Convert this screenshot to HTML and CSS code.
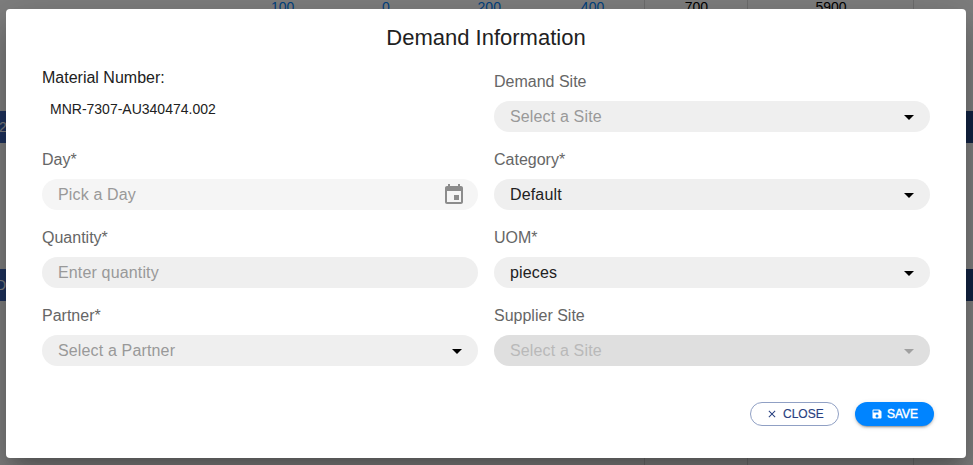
FILE: index.html
```html
<!DOCTYPE html>
<html lang="en">
<head>
<meta charset="utf-8">
<title>Demand Information</title>
<link rel="stylesheet" href="styles.css">
</head>
<body>
<div class="sheet">
  <div class="totals">
    <span class="cell link">100</span><span class="cell link">0</span><span class="cell link">200</span><span class="cell link">400</span><span class="cell total">700</span><span class="cell grand">5900</span><span class="cell rest"></span>
  </div>
  <div class="band first">2</div>
  <div class="band second">D</div>
  <div class="totals lower">
    <span class="cell"></span><span class="cell"></span><span class="cell"></span><span class="cell"></span><span class="cell total"></span><span class="cell grand"></span><span class="cell rest"></span>
  </div>
</div>
<div class="backdrop">
  <form class="dialog">
    <h2>Demand Information</h2>
    <div class="grid">
      <div class="field material">
        <div class="caption">Material Number:</div>
        <div class="number">MNR-7307-AU340474.002</div>
      </div>
      <div class="field"><div class="label">Demand Site</div><div class="control hint"><span>Select a Site</span><svg class="arrow" viewBox="0 0 24 24"><path d="M7 10l5 5 5-5z"/></svg></div></div>
      <div class="field"><div class="label">Day*</div><div class="control hint day"><span>Pick a Day</span><svg class="calendar" viewBox="0 0 24 24"><path d="M17 12h-5v5h5v-5zM16 1v2H8V1H6v2H5c-1.11 0-1.99.9-1.99 2L3 19c0 1.1.89 2 2 2h14c1.1 0 2-.9 2-2V5c0-1.1-.9-2-2-2h-1V1h-2zm3 18H5V8h14v11z"/></svg></div></div>
      <div class="field"><div class="label">Category*</div><div class="control"><span>Default</span><svg class="arrow" viewBox="0 0 24 24"><path d="M7 10l5 5 5-5z"/></svg></div></div>
      <div class="field"><div class="label">Quantity*</div><div class="control hint"><span>Enter quantity</span></div></div>
      <div class="field"><div class="label">UOM*</div><div class="control"><span>pieces</span><svg class="arrow" viewBox="0 0 24 24"><path d="M7 10l5 5 5-5z"/></svg></div></div>
      <div class="field"><div class="label">Partner*</div><div class="control hint"><span>Select a Partner</span><svg class="arrow" viewBox="0 0 24 24"><path d="M7 10l5 5 5-5z"/></svg></div></div>
      <div class="field"><div class="label">Supplier Site</div><div class="control disabled"><span>Select a Site</span><svg class="arrow" viewBox="0 0 24 24"><path d="M7 10l5 5 5-5z"/></svg></div></div>
    </div>
    <div class="actions">
      <button type="button" class="close"><svg viewBox="0 0 24 24"><path d="M19 6.41L17.59 5 12 10.59 6.41 5 5 6.41 10.59 12 5 17.59 6.41 19 12 13.41 17.59 19 19 17.59 13.41 12z"/></svg><span>CLOSE</span></button>
      <button type="button" class="save"><svg viewBox="0 0 24 24"><path d="M17 3H5c-1.11 0-2 .9-2 2v14c0 1.1.89 2 2 2h14c1.1 0 2-.9 2-2V7l-4-4zm-5 16c-1.66 0-3-1.34-3-3s1.34-3 3-3 3 1.34 3 3-1.34 3-3 3zm3-10H5V5h10v4z"/></svg><span>SAVE</span></button>
    </div>
  </form>
</div>
</body>
</html>
```
FILE: styles.css
```css
* { box-sizing: border-box; }
html, body { height: 100%; }
body {
  margin: 0;
  overflow: hidden;
  background: #fff;
  font-family: "Liberation Sans", Arial, sans-serif;
  color: #212121;
}
.sheet { height: 465px; display: flex; flex-direction: column; }
.totals { display: flex; height: 111px; flex: none; padding-left: 231px; }
.lower { height: 164px; }
.cell { width: 103.3px; text-align: center; font-size: 14px; line-height: 14px; color: #000; }
.link { color: #0084ff; }
.total { border-left: 1px solid #ddd; }
.grand { width: 166px; border-left: 1px solid #ddd; }
.rest { flex: 1; border-left: 1px solid #ddd; }
.band {
  flex: none;
  height: 32px;
  line-height: 32px;
  background: linear-gradient(90deg, #3e66bc, #284888);
  color: #fff;
  font-size: 14px;
}
.second { margin-top: 126px; text-indent: -4px; }
.first { text-indent: -1px; }
.backdrop {
  position: absolute;
  inset: 0;
  background: rgba(0, 0, 0, .5);
  padding: 9px 7px 7px 6px;
}
.dialog {
  height: 449px;
  padding: 16px 36px 0;
  background: #fff;
  border-radius: 4px;
  box-shadow: 0 11px 15px -7px rgba(0,0,0,.2), 0 24px 38px 3px rgba(0,0,0,.14), 0 9px 46px 8px rgba(0,0,0,.12);
}
h2 { margin: 0; font-weight: 400; font-size: 22px; line-height: 26px; text-align: center; }
.grid { display: grid; grid-template-columns: 1fr 1fr; gap: 16px; margin-top: 19px; }
.field { height: 62px; }
.label { height: 31px; line-height: 24px; font-size: 16px; color: #666; }
.caption { font-size: 16px; line-height: 16px; }
.number { font-size: 14px; line-height: 16px; padding: 15px 0 0 8px; }
.control {
  height: 31px;
  border-radius: 16px;
  background: #efefef;
  padding: 0 9px 0 16px;
  display: flex;
  align-items: center;
  justify-content: space-between;
  font-size: 16px;
  letter-spacing: .15px;
}
.hint span { color: #999; }
.day { background: #f5f5f5; padding-right: 12px; }
.disabled { background: #dfdfdf; }
.disabled span { color: #b9b9b9; }
.arrow { width: 24px; height: 24px; fill: #000; }
.disabled .arrow { fill: #a0a0a0; }
.calendar { width: 24px; height: 24px; fill: #8c8c8c; }
.actions { display: flex; justify-content: flex-end; gap: 16px; margin: 36px -4px 0 0; }
button {
  height: 24px;
  border-radius: 12px;
  font: 12px/22px "Liberation Sans", Arial, sans-serif;
  display: flex;
  align-items: center;
  padding: 0;
}
button svg { width: 12px; height: 12px; fill: currentColor; margin-right: 4px; }
.close { width: 89px; border: 1px solid #90a0c4; background: #fff; color: #284080; padding-left: 15px; }
.close svg { margin-right: 5px; }
.close span { -webkit-text-stroke: .15px currentColor; }
.save {
  width: 79px;
  border: 0;
  padding-left: 16px;
  background: #0084ff;
  color: #fff;
  box-shadow: 0 3px 1px -2px rgba(0,0,0,.2), 0 2px 2px rgba(0,0,0,.14), 0 1px 5px rgba(0,0,0,.12);
}
.save span { -webkit-text-stroke: .4px currentColor; }
```
